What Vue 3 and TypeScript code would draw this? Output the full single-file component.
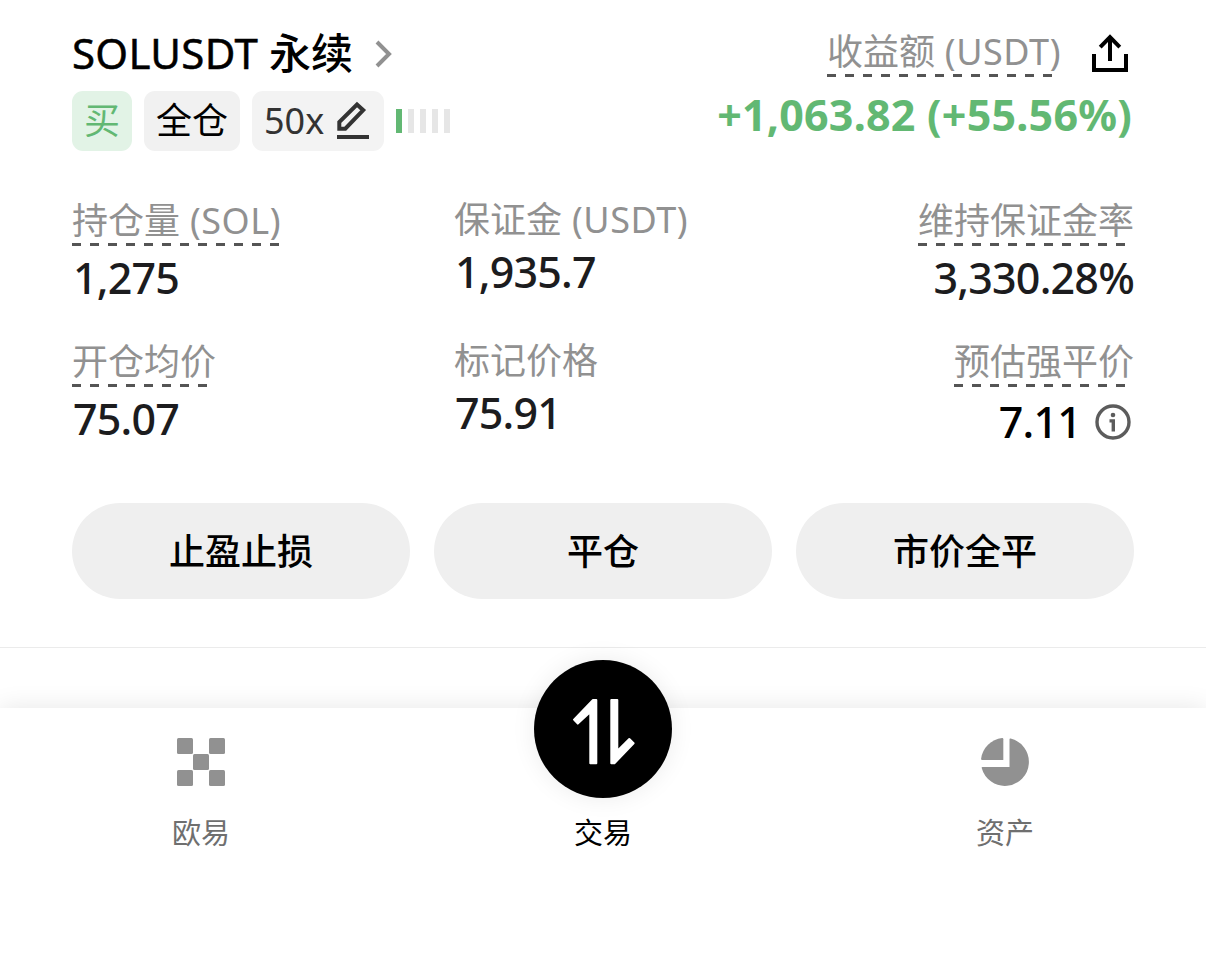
<script setup lang="ts">
interface Stat {
  label: string
  unit?: string
  value: string
  hint: boolean
  info?: boolean
}

const stats: Stat[] = [
  { label: '持仓量', unit: '(SOL)', value: '1,275', hint: true },
  { label: '保证金', unit: '(USDT)', value: '1,935.7', hint: false },
  { label: '维持保证金率', value: '3,330.28%', hint: true },
  { label: '开仓均价', value: '75.07', hint: true },
  { label: '标记价格', value: '75.91', hint: false },
  { label: '预估强平价', value: '7.11', hint: true, info: true },
]

const actions: string[] = ['止盈止损', '平仓', '市价全平']
</script>

<template>
  <div class="screen">
    <section class="position">
      <header class="head">
        <div class="instrument">
          <h1 class="title">
            <span class="symbol">SOLUSDT</span>
            <span class="kind">永续</span>
            <svg class="chevron" width="18" height="28" viewBox="0 0 18 28">
              <path d="M3 2 L15 14 L3 26" fill="none" stroke="#919191" stroke-width="4" />
            </svg>
          </h1>
          <div class="tags">
            <span class="tag buy"><span>买</span></span>
            <span class="tag"><span>全仓</span></span>
            <span class="tag lever">
              <span>50x</span>
              <svg width="36" height="40" viewBox="0 0 36 40" fill="none" stroke="#333" stroke-width="4">
                <path d="M3.3 28.7 V22 L21 4.6 L27.2 10.2 L9.3 28.7 Z" />
                <path d="M1 37 H33" />
              </svg>
            </span>
            <span class="risk"><i v-for="n in 5" :key="n" :class="{ on: n === 1 }"></i></span>
          </div>
        </div>
        <div class="pnl">
          <div class="pnl-top">
            <span class="label hint">收益额<span class="unit">{{ ' (USDT)' }}</span></span>
            <svg width="36" height="38" viewBox="0 0 36 38" fill="none" stroke="#000" stroke-width="4">
              <path d="M2 20 V36 H34 V20" />
              <path d="M18 3 V27 M8.2 13.2 L18 3.2 L27.8 13.2" />
            </svg>
          </div>
          <div class="pnl-value">+1,063.82 (+55.56%)</div>
        </div>
      </header>

      <div class="stats">
        <div v-for="s in stats" :key="s.label" class="stat" :class="{ plain: !s.hint, liq: s.info }">
          <span class="label" :class="{ hint: s.hint }">{{ s.label }}<span v-if="s.unit" class="unit">{{ ' ' + s.unit }}</span></span>
          <span class="value">
            <span>{{ s.value }}</span>
            <svg v-if="s.info" width="36" height="36" viewBox="0 0 36 36">
              <circle cx="18" cy="18" r="16" fill="none" stroke="#5c5c5c" stroke-width="3.4" />
              <circle cx="18" cy="11" r="2.3" fill="#5c5c5c" />
              <path d="M14.5 16.9 H18.3 V27.5" fill="none" stroke="#5c5c5c" stroke-width="3.4" />
            </svg>
          </span>
        </div>
      </div>

      <div class="actions">
        <button v-for="a in actions" :key="a" type="button">{{ a }}</button>
      </div>
    </section>

    <nav class="tabs">
      <a class="tab">
        <svg width="48" height="48" viewBox="0 0 48 48" fill="#919191">
          <rect width="16" height="16" rx="1.5" />
          <rect x="32" width="16" height="16" rx="1.5" />
          <rect x="16" y="16" width="16" height="16" rx="1.5" />
          <rect y="32" width="16" height="16" rx="1.5" />
          <rect x="32" y="32" width="16" height="16" rx="1.5" />
        </svg>
        <span>欧易</span>
      </a>
      <a class="tab active">
        <span class="disc">
          <svg width="64" height="68" viewBox="0 0 64 68" fill="#fff" stroke="#fff" stroke-width="2" stroke-linejoin="round">
            <path d="M21 2 H24.3 V65.3 H18.3 V14 L5.8 25.6 L2 21.6 Z" />
            <path d="M39.3 2 H45.3 V53 L57.3 41 L61.6 45.3 L42.4 65.3 H39.3 Z" />
          </svg>
        </span>
        <span>交易</span>
      </a>
      <a class="tab">
        <svg width="48" height="48" viewBox="0 0 48 48" fill="#919191">
          <path d="M22.3 1.2 V22 H1.2 Q0 22 0.1 20.8 A24 24 0 0 1 21.1 0.1 Q22.3 0 22.3 1.2 Z" />
          <path d="M28.5 1.4 Q28.5 0.3 29.6 0.6 A24 24 0 1 1 0.7 30.1 Q0.4 29 1.5 29 H28.5 Z" />
        </svg>
        <span>资产</span>
      </a>
    </nav>
  </div>
</template>

<style>
body {
  background: #fff;
}
</style>

<style scoped>
.screen {
  width: 1206px;
  height: 957px;
  overflow: hidden;
  display: flex;
  flex-direction: column;
  background: #fff;
  color: #000;
  font-family: 'Noto Sans', 'Noto Sans CJK SC', sans-serif;
}
.position {
  box-sizing: border-box;
  height: 648px;
  padding: 22px 72px 0;
  border-bottom: 1px solid #ebebeb;
}
.head {
  display: flex;
  justify-content: space-between;
  height: 129px;
}
.title {
  margin: 0 0 9px;
  display: flex;
  align-items: center;
  font-size: 42px;
  font-weight: 500;
  line-height: 60px;
  height: 60px;
}
.symbol {
  padding-top: 1px;
  font-weight: 400;
  -webkit-text-stroke: 0.5px currentColor;
  letter-spacing: 0.3px;
}
.kind {
  margin-left: 11px;
  padding-top: 2px;
}
.chevron {
  margin: 4px 0 0 21px;
}
.tags {
  display: flex;
  align-items: center;
  gap: 12px;
}
.tag {
  box-sizing: border-box;
  height: 60px;
  padding: 0 12px;
  display: flex;
  border-radius: 11px;
  background: #f1f1f1;
  font-size: 36px;
  line-height: 60px;
}
.tag.buy {
  background: #e2f3e6;
  color: #62b873;
}
.tag.lever {
  width: 132px;
  justify-content: space-between;
  background: #f3f3f3;
  color: #333;
}
.lever svg {
  margin-top: 9px;
}
.risk {
  display: flex;
  gap: 6px;
}
.risk i {
  width: 6px;
  height: 24px;
  background: #e6e6e6;
}
.risk i.on {
  background: #62b873;
}
.pnl {
  display: flex;
  flex-direction: column;
  align-items: flex-end;
}
.pnl-top {
  display: flex;
  align-items: flex-start;
  gap: 31px;
  padding-right: 6px;
}
.pnl-top .label {
  margin-top: 3px;
}
.pnl-top svg {
  margin-top: 12px;
}
.label {
  box-sizing: border-box;
  height: 52px;
  padding-top: 2px;
  font-size: 36px;
  line-height: 50px;
  color: #919191;
  font-weight: 400;
  white-space: pre;
}
.label.hint {
  background: repeating-linear-gradient(90deg, #555 0 9px, transparent 9px 18px) 0 100% / 100% 3px no-repeat;
}
.unit {
  letter-spacing: 0.55px;
}
.pnl-value {
  margin: 13px 2px 0 0;
  font-size: 43px;
  font-weight: 700;
  line-height: 50px;
  letter-spacing: 0.22px;
  color: #62b873;
  white-space: nowrap;
}
.stats {
  display: grid;
  grid-template-columns: 382px 380px 300px;
  grid-template-rows: 141px 141px;
  margin-top: 43px;
}
.stat {
  display: flex;
  flex-direction: column;
  align-items: flex-start;
}
.stat.plain {
  margin-top: -1px;
}
.stat:nth-child(3n) {
  align-items: flex-end;
}
.value {
  display: flex;
  align-items: center;
  gap: 14px;
  margin-top: 7px;
  padding-left: 1px;
  font-size: 43px;
  font-weight: 500;
  line-height: 50px;
  letter-spacing: -0.8px;
  color: #1c1c1e;
}
.plain .value {
  margin-top: 2px;
}
.liq .value {
  margin-top: 10px;
  padding-right: 3px;
  color: #000;
}
.actions {
  display: grid;
  grid-template-columns: repeat(3, 1fr);
  gap: 24px;
  margin-top: 27px;
}
.actions button {
  height: 96px;
  padding: 2px 0 0;
  border: 0;
  border-radius: 48px;
  background: #efefef;
  color: #000;
  font: 500 36px/94px 'Noto Sans', 'Noto Sans CJK SC', sans-serif;
}
.tabs {
  margin-top: 60px;
  height: 249px;
  display: grid;
  grid-template-columns: repeat(3, 1fr);
  background: #fff;
  box-shadow: 0 0 24px rgba(0, 0, 0, 0.1);
}
.tab {
  display: flex;
  flex-direction: column;
  align-items: center;
  padding-top: 30px;
  color: #6f6f6f;
  font-size: 29px;
  line-height: 40px;
}
.tab > span:last-child {
  margin-top: 27px;
}
.tab.active {
  padding-top: 0;
  color: #000;
}
.disc {
  box-sizing: border-box;
  width: 138px;
  height: 138px;
  margin-top: -48px;
  padding: 6px 0 0 2px;
  border-radius: 50%;
  background: #000;
  box-shadow: 0 0 24px rgba(0, 0, 0, 0.08);
  display: flex;
  align-items: center;
  justify-content: center;
}
.tab.active > span:last-child {
  margin-top: 15px;
}
</style>
